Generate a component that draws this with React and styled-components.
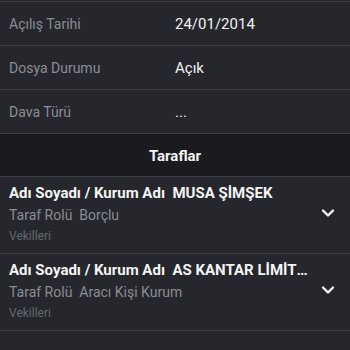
import React from "react";
import styled, { createGlobalStyle } from "styled-components";

const Global = createGlobalStyle`
  html, body { margin: 0; padding: 0; background: #25272c; }
  body { font-family: Roboto, "Noto Sans", sans-serif; -webkit-font-smoothing: antialiased; }
`;

const Page = styled.div`
  width: 350px;
  height: 350px;
  overflow: hidden;
  background: #25272c;
  display: flex;
  flex-direction: column;
`;

const TopEdge = styled.div`
  height: 1px;
  border-bottom: 1px solid #3b3e45;
  flex: none;
`;

const InfoRow = styled.div`
  display: grid;
  grid-template-columns: 175px 1fr;
  align-items: center;
  height: 43px;
  border-bottom: 1px solid #3b3e45;
  flex: none;
`;

const Label = styled.div`
  padding-left: 9px;
  font-size: 14px;
  color: #8b8d92;
`;

const Value = styled.div`
  font-size: 15px;
  color: #f2f2f2;
`;

const SectionHeader = styled.div`
  height: 42px;
  background: #1a1b1e;
  border-bottom: 1px solid #3b3e45;
  display: flex;
  align-items: center;
  justify-content: center;
  font-size: 15px;
  font-weight: 700;
  color: #f2f2f2;
  flex: none;
  padding-top: 1px;
  box-sizing: border-box;
  height: 43px;
`;

const Party = styled.div`
  display: flex;
  align-items: center;
  height: 76px;
  border-bottom: 1px solid #3b3e45;
  flex: none;
`;

const PartyBody = styled.div`
  flex: 1;
  min-width: 0;
  padding-left: 9px;
  display: flex;
  flex-direction: column;
  margin-top: -1px;
`;

const Title = styled.div`
  font-size: 15px;
  font-weight: 700;
  color: #f4f4f4;
  line-height: 21px;
  white-space: nowrap;
  overflow: hidden;
  text-overflow: ellipsis;
`;

const Role = styled.div`
  font-size: 14px;
  color: #8b8d92;
  line-height: 22px;
`;

const Lawyers = styled.div`
  font-size: 12px;
  color: #65686e;
  line-height: 20px;
`;

const Chevron = styled.div`
  width: 40px;
  flex: none;
  display: flex;
  justify-content: center;
  padding-right: 2px;
  margin-top: -4px;
`;

const ChevronIcon = () => (
  <svg width="14" height="10" viewBox="0 0 14 10">
    <path d="M2 2.5 L7 7.5 L12 2.5" fill="none" stroke="#f2f2f2" strokeWidth="2.4" strokeLinecap="round" strokeLinejoin="round" />
  </svg>
);

const infos = [
  ["Açılış Tarihi", "24/01/2014"],
  ["Dosya Durumu", "Açık"],
  ["Dava Türü", "..."],
];

const parties = [
  { name: "MUSA ŞİMŞEK", role: "Borçlu" },
  { name: "AS KANTAR LİMİTED ŞİRKETİ", role: "Aracı Kişi Kurum" },
];

export default function App() {
  return (
    <Page>
      <Global />
      <TopEdge />
      {infos.map(([l, v]) => (
        <InfoRow key={l}>
          <Label>{l}</Label>
          <Value>{v}</Value>
        </InfoRow>
      ))}
      <SectionHeader>Taraflar</SectionHeader>
      {parties.map((p) => (
        <Party key={p.name}>
          <PartyBody>
            <Title>Adı Soyadı / Kurum Adı&nbsp; {p.name}</Title>
            <Role>Taraf Rolü&nbsp; {p.role}</Role>
            <Lawyers>Vekilleri</Lawyers>
          </PartyBody>
          <Chevron>
            <ChevronIcon />
          </Chevron>
        </Party>
      ))}
    </Page>
  );
}
